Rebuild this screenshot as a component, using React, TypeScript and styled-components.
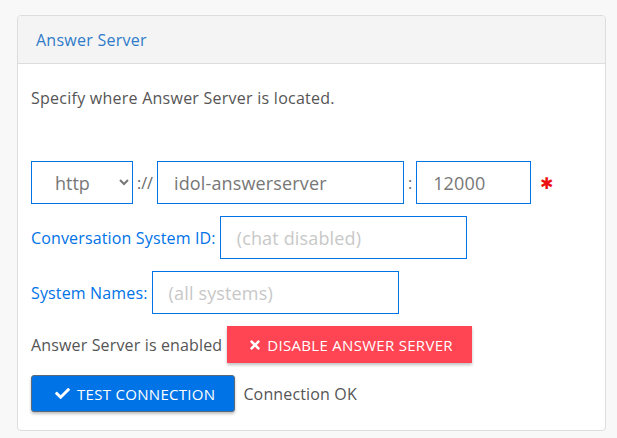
import React from "react";
import styled, { createGlobalStyle } from "styled-components";
import { FaCheck, FaTimes } from "react-icons/fa";

const GlobalStyle = createGlobalStyle`
  html, body {
    margin: 0;
    padding: 0;
    background: #f8f8f8;
    font-family: "Open Sans", Lato, "Liberation Sans", sans-serif;
  }
`;

function App() {
  return (
    <Page>
      <GlobalStyle />
      <Panel>
        <PanelHeader>
          <PanelTitle>Answer Server</PanelTitle>
        </PanelHeader>
        <PanelBody>
          <Intro>Specify where Answer Server is located.</Intro>
          <Row>
            <ProtocolSelect defaultValue="http">
              <option value="http">http</option>
              <option value="https">https</option>
            </ProtocolSelect>
            <Sep>://</Sep>
            <TextInput $width={247} defaultValue="idol-answerserver" />
            <Sep>:</Sep>
            <TextInput $width={115} defaultValue="12000" />
            <Required>✱</Required>
          </Row>
          <Row>
            <Label>Conversation System ID:</Label>
            <TextInput $width={247} placeholder="(chat disabled)" />
          </Row>
          <Row>
            <Label>System Names:</Label>
            <TextInput $width={247} placeholder="(all systems)" />
          </Row>
          <Row $gap={5}>
            <Status>Answer Server is enabled</Status>
            <ActionButton $variant="danger">
              <FaTimes size={14} />
              DISABLE ANSWER SERVER
            </ActionButton>
          </Row>
          <Row $gap={8}>
            <ActionButton $variant="primary">
              <FaCheck size={15} />
              TEST CONNECTION
            </ActionButton>
            <Status>Connection OK</Status>
          </Row>
        </PanelBody>
      </Panel>
    </Page>
  );
}

export default App;

const Page = styled.div`
  padding: 15px 11px 6px 17px;
`;

const Panel = styled.section`
  background: #fff;
  border: 1px solid #dddddd;
  border-radius: 4px;
  overflow: hidden;
`;

const PanelHeader = styled.header`
  height: 47px;
  display: flex;
  align-items: center;
  padding: 0 18px;
  background: #f4f4f4;
  border-bottom: 1px solid #dddddd;
`;

const PanelTitle = styled.h3`
  margin: 0;
  font-size: 16px;
  font-weight: 400;
  letter-spacing: 0.25px;
  color: #2f7bc8;
`;

const PanelBody = styled.div`
  padding: 22px 13px 18px 13px;
  display: flex;
  flex-direction: column;
  gap: 12px;
`;

const Intro = styled.p`
  margin: 0 0 39px 0;
  font-size: 16px;
  line-height: 24px;
  letter-spacing: 0.25px;
  color: #555;
`;

const Row = styled.div<{ $gap?: number }>`
  display: flex;
  align-items: center;
  gap: ${(p) => p.$gap ?? 4}px;
`;

const ProtocolSelect = styled.select`
  width: 102px;
  height: 43px;
  padding: 0 8px 0 19px;
  border: 1px solid #0073e7;
  border-radius: 0;
  background: #fff;
  font-family: inherit;
  font-size: 18px;
  color: #777;
`;

const Sep = styled.span`
  font-size: 16px;
  color: #666;
`;

const TextInput = styled.input<{ $width: number }>`
  box-sizing: border-box;
  width: ${(p) => p.$width}px;
  height: 43px;
  padding: 0 16px;
  border: 1px solid #0073e7;
  border-radius: 0;
  font-family: inherit;
  font-size: 18px;
  letter-spacing: 0.15px;
  color: #777;
  outline: none;

  &::placeholder {
    color: #c8c8c8;
  }
`;

const Required = styled.span`
  margin-left: 5px;
  color: #ee1111;
  font-size: 16px;
`;

const Label = styled.label`
  font-size: 16px;
  letter-spacing: 0.15px;
  color: #0073e7;
`;

const Status = styled.span`
  font-size: 16px;
  letter-spacing: 0.15px;
  color: #555;
`;

const ActionButton = styled.button<{ $variant: "danger" | "primary" }>`
  height: 37px;
  display: inline-flex;
  align-items: center;
  gap: ${(p) => (p.$variant === "primary" ? "7px" : "5px")};
  padding: ${(p) => (p.$variant === "primary" ? "0 19px 0 23px" : "0 19px 0 21px")};
  font-family: inherit;
  font-size: 15px;
  letter-spacing: 0.3px;
  color: #fff;
  border-radius: ${(p) => (p.$variant === "primary" ? "3px" : "0")};
  border: ${(p) => (p.$variant === "primary" ? "1px solid #5a6a7a" : "none")};
  background: ${(p) => (p.$variant === "primary" ? "#0073e7" : "#ff4553")};
  box-shadow: 0 2px 3px rgba(0, 0, 0, 0.25);
  cursor: pointer;
`;
